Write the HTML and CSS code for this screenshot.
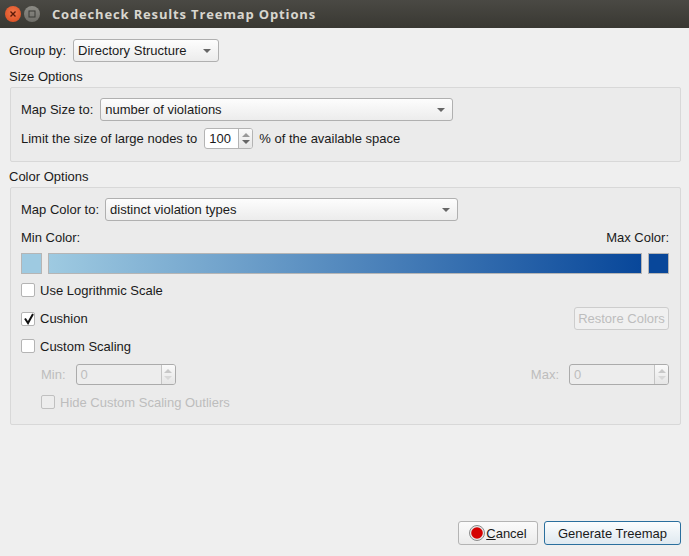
FILE: index.html
```html
<!DOCTYPE html>
<html lang="en">
<head>
    <meta charset="UTF-8">
    <meta name="viewport" content="width=device-width, initial-scale=1.0">
    <title>Codecheck Results Treemap Options</title>
    <link rel="stylesheet" href="styles.css">
</head>
<body>
    <div class="window">
        <div class="titlebar">
            <span class="win-btn win-close">
                <svg width="8" height="8" viewBox="0 0 8 8"><path d="M1.5 1.5L6.5 6.5M6.5 1.5L1.5 6.5" stroke="#5a1a08" stroke-width="1.4" fill="none"/></svg>
            </span>
            <span class="win-btn win-max">
                <svg width="8" height="8" viewBox="0 0 8 8"><rect x="1" y="1" width="6" height="6" stroke="#3a3a36" stroke-width="1" fill="none"/></svg>
            </span>
            <span class="title">Codecheck Results Treemap Options</span>
        </div>

        <div class="content">
            <div class="row group-row">
                <span class="group-label">Group by:</span>
                <div class="combo combo-group"><span>Directory Structure</span><i class="caret"></i></div>
            </div>

            <div class="section-label">Size Options</div>
            <div class="panel size-panel">
                <div class="row">
                    <span>Map Size to:</span>
                    <div class="combo combo-wide combo-size"><span>number of violations</span><i class="caret"></i></div>
                </div>
                <div class="row limit-row">
                    <span>Limit the size of large nodes to</span>
                    <div class="spin spin-small">
                        <span class="spin-value">100</span>
                        <div class="spin-arrows"><i class="up"></i><i class="down"></i></div>
                    </div>
                    <span>% of the available space</span>
                </div>
            </div>

            <div class="section-label">Color Options</div>
            <div class="panel color-panel">
                <div class="row">
                    <span>Map Color to:</span>
                    <div class="combo combo-wide"><span>distinct violation types</span><i class="caret"></i></div>
                </div>
                <div class="row between color-labels">
                    <span>Min Color:</span>
                    <span>Max Color:</span>
                </div>
                <div class="row color-bar-row">
                    <div class="swatch swatch-min"></div>
                    <div class="gradient-bar"></div>
                    <div class="swatch swatch-max"></div>
                </div>
                <label class="check-row log-row"><i class="check"></i>Use Logrithmic Scale</label>
                <div class="row between cushion-row">
                    <label class="check-row">
                        <i class="check">
                            <svg width="14" height="14" viewBox="0 0 14 14"><path d="M4 6.5L7 11L12 2" stroke="#111" stroke-width="2" fill="none"/></svg>
                        </i>Cushion
                    </label>
                    <div class="btn-disabled">Restore Colors</div>
                </div>
                <label class="check-row scaling-row"><i class="check"></i>Custom Scaling</label>
                <div class="row between scale-inputs disabled">
                    <div class="row scale-field">
                        <span>Min:</span>
                        <div class="spin spin-wide">
                            <span class="spin-value">0</span>
                            <div class="spin-arrows"><i class="up"></i><i class="down"></i></div>
                        </div>
                    </div>
                    <div class="row scale-field">
                        <span>Max:</span>
                        <div class="spin spin-wide">
                            <span class="spin-value">0</span>
                            <div class="spin-arrows"><i class="up"></i><i class="down"></i></div>
                        </div>
                    </div>
                </div>
                <label class="check-row outliers-row disabled"><i class="check"></i>Hide Custom Scaling Outliers</label>
            </div>
        </div>

        <div class="footer">
            <div class="btn btn-cancel">
                <svg width="16" height="16" viewBox="0 0 16 16"><circle cx="8" cy="8" r="7.5" fill="#e8e8e8" stroke="#8a8a8a"/><circle cx="8" cy="8" r="5.8" fill="#d40000"/></svg>
                <span><u>C</u>ancel</span>
            </div>
            <div class="btn btn-primary">Generate Treemap</div>
        </div>
    </div>
</body>
</html>
```

FILE: styles.css
```css
* {
    box-sizing: border-box;
}

html, body {
    margin: 0;
    height: 100%;
}

body {
    font-family: "Liberation Sans", Arial, sans-serif;
    font-size: 13px;
    color: #1a1a1a;
    background-color: #efefef;
    overflow: hidden;
}

.window {
    display: flex;
    flex-direction: column;
    height: 556px;
}

/* title bar */
.titlebar {
    display: flex;
    align-items: center;
    height: 28px;
    flex: none;
    padding-left: 5px;
    background: linear-gradient(#4a4944, #393832);
}

.win-btn {
    display: flex;
    align-items: center;
    justify-content: center;
    width: 16px;
    height: 16px;
    border-radius: 50%;
    margin-right: 3px;
}

.win-close {
    background: radial-gradient(circle at 50% 40%, #f0764a, #d9491c);
}

.win-max {
    background: linear-gradient(#8c8b85, #6f6e69);
}

.title {
    margin-left: 9px;
    font-family: "Open Sans", "Noto Sans", sans-serif;
    font-weight: 700;
    font-size: 13px;
    letter-spacing: 0.84px;
    color: #d8d6cf;
}

/* main content */
.content {
    padding: 0 8px 0 10px;
}

.row {
    display: flex;
    align-items: center;
}

.between {
    justify-content: space-between;
}

.group-row {
    margin-top: 11px;
    height: 23px;
}

.group-label {
    margin-left: -1px;
    margin-right: 7px;
}

.section-label {
    margin: 7px 0 3px -1px;
    height: 15px;
    line-height: 15px;
}

.panel {
    border: 1px solid #d8d8d8;
    border-radius: 2px;
    background-color: #ebebeb;
    padding: 10px 11px 0 10px;
}

.size-panel {
    height: 75px;
}

.color-panel {
    height: 238px;
}

/* combo boxes */
.combo {
    display: flex;
    align-items: center;
    justify-content: space-between;
    height: 23px;
    margin-left: 6px;
    padding: 0 7px 0 4px;
    border: 1px solid #b0b0b0;
    border-radius: 3px;
    background: linear-gradient(#fdfdfd, #ececec);
}

.combo-group {
    width: 146px;
    margin-left: 0;
}

.combo-wide {
    width: 353px;
}

.combo-size {
    margin-left: 7px;
}

.caret {
    width: 0;
    height: 0;
    border-left: 4px solid transparent;
    border-right: 4px solid transparent;
    border-top: 4px solid #666;
}

/* spin boxes */
.spin {
    display: flex;
    height: 21px;
    border: 1px solid #b4b4b4;
    border-radius: 3px;
    background-color: #fff;
}

.spin-small {
    width: 49px;
    margin: 0 6px 0 7px;
}

.spin-wide {
    width: 100px;
}

.spin-value {
    flex: 1;
    padding-left: 4px;
    line-height: 19px;
}

.spin-arrows {
    display: flex;
    flex-direction: column;
    align-items: center;
    justify-content: center;
    gap: 3px;
    width: 14px;
    border-left: 1px solid #b4b4b4;
    background: linear-gradient(#fafafa, #e6e6e6);
    border-radius: 0 2px 2px 0;
}

.spin-arrows i {
    width: 0;
    height: 0;
    border-left: 4px solid transparent;
    border-right: 4px solid transparent;
}

.spin-arrows .up {
    border-bottom: 4px solid #999;
}

.spin-arrows .down {
    border-top: 4px solid #666;
}

.limit-row {
    margin-top: 7px;
    height: 21px;
}

/* color scale */
.color-labels {
    margin-top: 9px;
    height: 15px;
}

.color-bar-row {
    margin-top: 8px;
    gap: 6px;
}

.swatch {
    width: 21px;
    height: 21px;
    border: 1px solid #b5b5b5;
}

.swatch-min {
    background-color: #9ecae1;
}

.swatch-max {
    background-color: #08479a;
}

.gradient-bar {
    flex: 1;
    height: 21px;
    border: 1px solid #b5b5b5;
    background: linear-gradient(to right, #9ecae1, #08479a);
}

/* check boxes */
.check-row {
    display: flex;
    align-items: center;
    height: 14px;
}

.check {
    flex: none;
    width: 14px;
    height: 14px;
    margin-right: 5px;
    border: 1px solid #b4b4b4;
    border-radius: 2px;
    background-color: #fff;
    display: flex;
    align-items: center;
    justify-content: center;
}

.check svg {
    flex: none;
}

.log-row {
    margin-top: 9px;
}

.cushion-row {
    margin-top: 10px;
    height: 23px;
}

.scaling-row {
    margin-top: 9px;
}

.scale-inputs {
    margin-top: 11px;
    height: 21px;
    padding-left: 20px;
}

.scale-field {
    gap: 10px;
}

.outliers-row {
    margin: 10px 0 0 20px;
}

/* disabled state */
.disabled {
    color: #bdbdbd;
}

.disabled .spin {
    background-color: #ededed;
    border-color: #ababab;
}

.disabled .spin-arrows {
    border-color: #c4c4c4;
}

.disabled .spin-arrows .up {
    border-bottom-color: #c8c8c8;
}

.disabled .spin-arrows .down {
    border-top-color: #d8d8d8;
}

.disabled .check {
    background-color: #ededed;
    border-color: #c0c0c0;
}

.btn-disabled {
    width: 95px;
    height: 23px;
    line-height: 21px;
    text-align: center;
    color: #bdbdbd;
    border: 1px solid #cdcdcd;
    border-radius: 3px;
    background-color: #f0f0f0;
}

/* bottom buttons */
.footer {
    display: flex;
    justify-content: flex-end;
    gap: 6px;
    margin-top: auto;
    padding: 0 8px 11px 0;
}

.btn {
    display: flex;
    align-items: center;
    justify-content: center;
    height: 24px;
    border-radius: 3px;
}

.btn-cancel {
    width: 80px;
    gap: 1px;
    border: 1px solid #b4b4b4;
    background: linear-gradient(#fbfbfb, #ebebeb);
}

.btn-primary {
    width: 137px;
    border: 1px solid #2a6f9e;
    background: linear-gradient(#fbfdfe, #dfe9f0);
}
```
